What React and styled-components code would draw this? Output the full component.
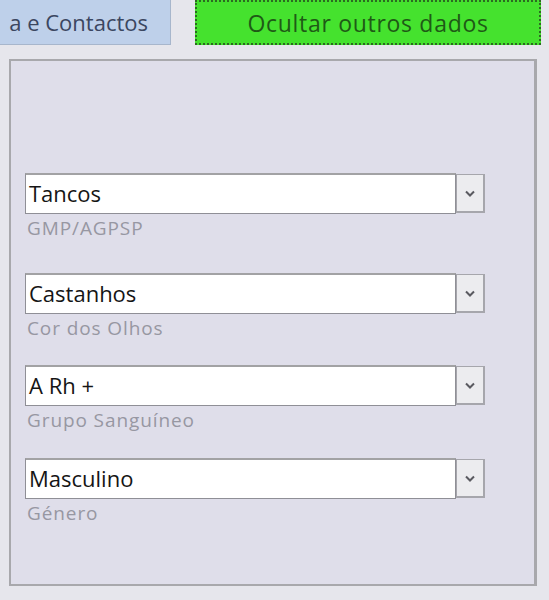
import React from 'react';
import styled, { createGlobalStyle } from 'styled-components';

const GlobalStyle = createGlobalStyle`
    html, body {
        margin: 0;
        padding: 0;
        background: #e6e6ec;
        font-family: "Open Sans", "Noto Sans", sans-serif;
    }
`;

const Page = styled.div`
    width: 549px;
    height: 600px;
    overflow: hidden;
    display: flex;
    flex-direction: column;
`;

const TopBar = styled.div`
    display: flex;
    align-items: flex-start;
    height: 46px;
`;

const Tab = styled.div`
    width: 171px;
    height: 45px;
    box-sizing: border-box;
    background: #bed0ea;
    border-right: 1px solid #a7b6cc;
    border-bottom: 1px solid #a7b6cc;
    color: #3b4660;
    font-size: 22px;
    display: flex;
    align-items: center;
    justify-content: flex-end;
    padding-right: 22px;
    white-space: nowrap;
    overflow: hidden;
`;

const ToggleButton = styled.div`
    margin-left: 24px;
    width: 346px;
    height: 45px;
    box-sizing: border-box;
    background: #45e22e;
    border: 2px dotted #2c6a22;
    color: #1f5a16;
    font-size: 23px;
    letter-spacing: 0.7px;
    display: flex;
    align-items: center;
    justify-content: center;
`;

const Panel = styled.div`
    margin: 13px 0 0 9px;
    width: 528px;
    height: 527px;
    box-sizing: border-box;
    background: #dfdeea;
    border: 2px solid #a8a8ac;
    border-right-width: 3px;
    padding: 112px 0 0 14px;
    display: flex;
    flex-direction: column;
`;

const Field = styled.div`
    margin-top: ${p => p.gap || 0}px;
    display: flex;
    flex-direction: column;
`;

const Combo = styled.div`
    display: flex;
    width: 460px;
    height: 41px;
`;

const ComboValue = styled.div`
    flex: 1;
    box-sizing: border-box;
    background: #fff;
    border: 1px solid #8f8f96;
    border-top: 2px solid #a2a2a4;
    color: #151515;
    font-size: 22px;
    display: flex;
    align-items: center;
    padding: 0 0 2px 3px;
`;

const ComboArrow = styled.div`
    width: 29px;
    box-sizing: border-box;
    background: #ececef;
    border: 1px solid #a6a6ac;
    border-right-width: 2px;
    border-bottom-width: 2px;
    display: flex;
    align-items: center;
    justify-content: center;
    margin: 1px 0 1px 0;
`;

const Label = styled.div`
    margin-top: 1px;
    margin-left: 2px;
    color: #9797a2;
    font-size: 19px;
    letter-spacing: 0.9px;
`;

const Chevron = () => (
    <svg width="10" height="7" viewBox="0 0 10 7">
        <path d="M1 1.5 L5 5.5 L9 1.5" fill="none" stroke="#5a5a60" strokeWidth="2" />
    </svg>
);

const fields = [
    { value: 'Tancos', label: 'GMP/AGPSP', gap: 0 },
    { value: 'Castanhos', label: 'Cor dos Olhos', gap: 32 },
    { value: 'A Rh +', label: 'Grupo Sanguíneo', gap: 24 },
    { value: 'Masculino', label: 'Género', gap: 25 },
];

export default function App() {
    return (
        <Page>
            <GlobalStyle />
            <TopBar>
                <Tab>a e Contactos</Tab>
                <ToggleButton>Ocultar outros dados</ToggleButton>
            </TopBar>
            <Panel>
                {fields.map(f => (
                    <Field key={f.label} gap={f.gap}>
                        <Combo>
                            <ComboValue>{f.value}</ComboValue>
                            <ComboArrow><Chevron /></ComboArrow>
                        </Combo>
                        <Label>{f.label}</Label>
                    </Field>
                ))}
            </Panel>
        </Page>
    );
}
